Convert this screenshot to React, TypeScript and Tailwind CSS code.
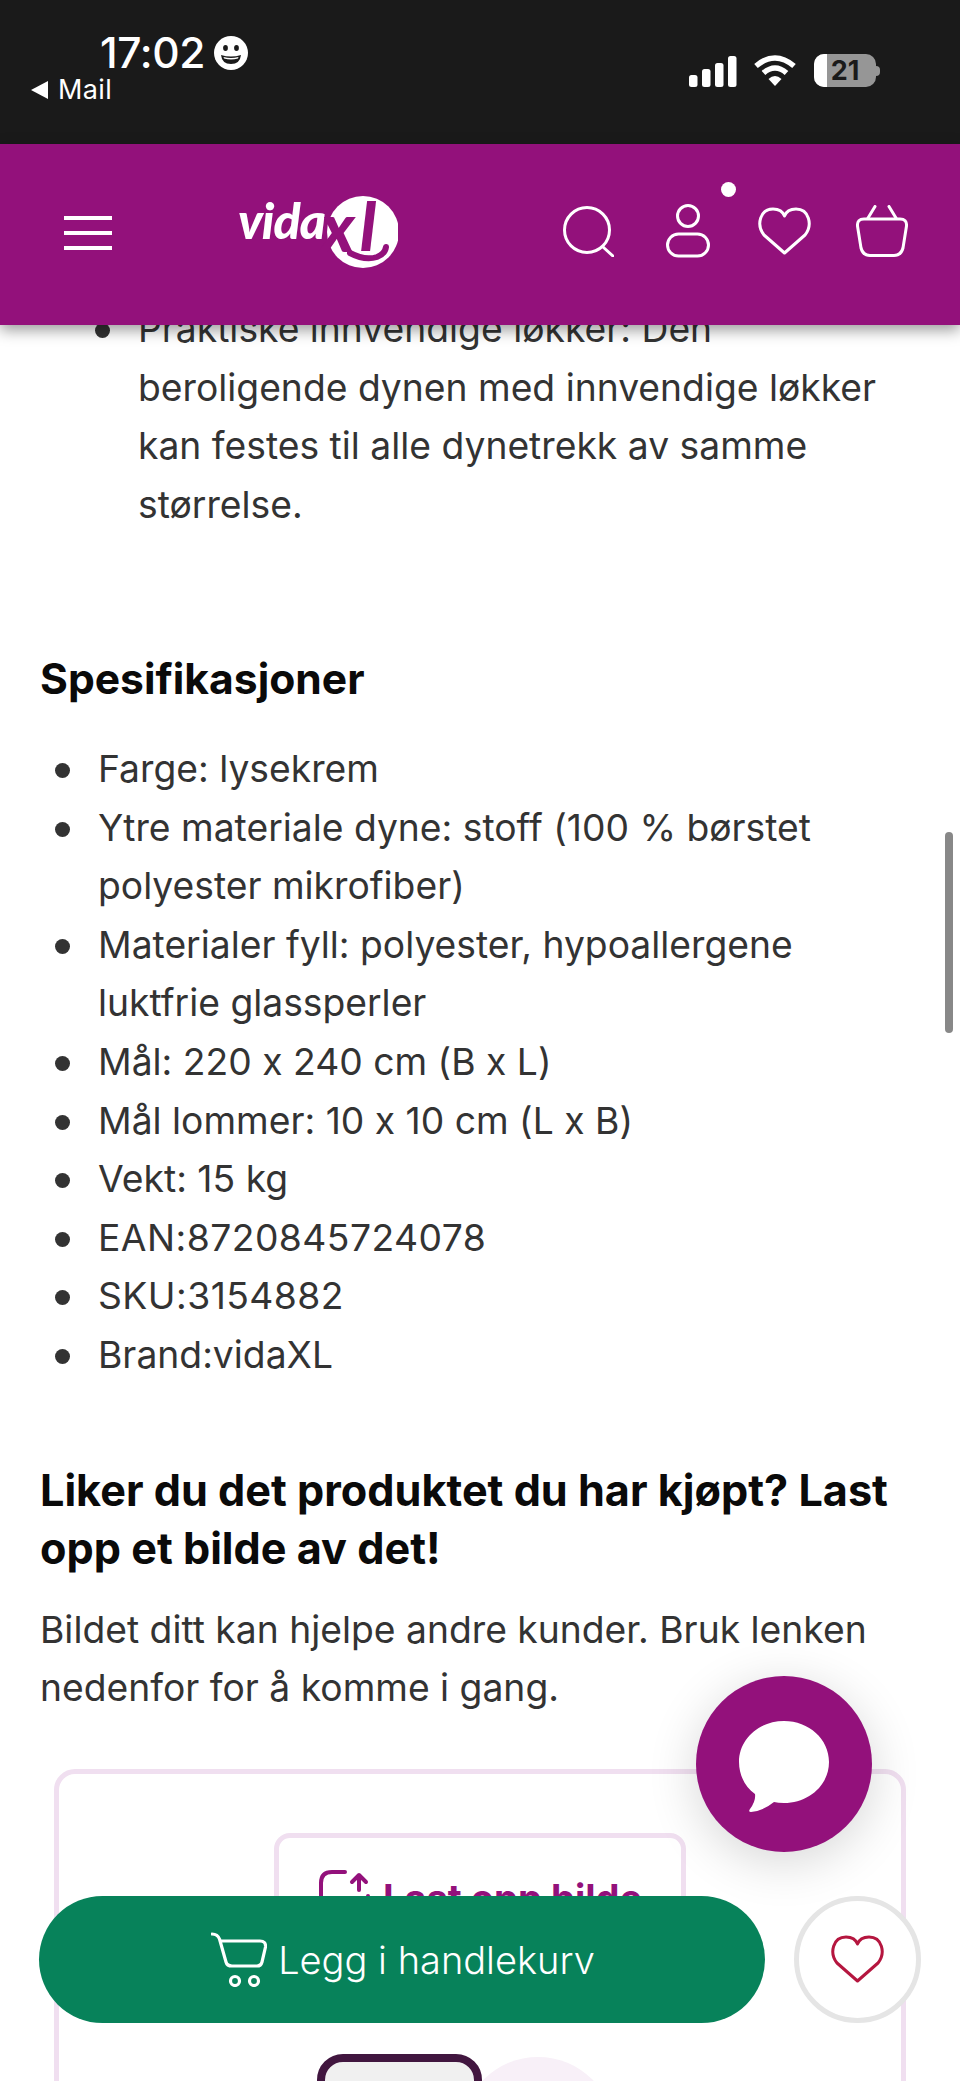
const font = { fontFamily: "Inter, 'Noto Sans', sans-serif" };

function Heart({ className, sw = 3 }: { className: string; sw?: number }) {
  return (
    <svg viewBox="0 0 53 48" fill="none" stroke="currentColor" strokeWidth={sw} strokeLinejoin="round" className={className}>
      <path d="M26.5 46 L6 28 C-2 18 2 2 15 2 C21 2 25 5 26.5 9 C28 5 32 2 38 2 C51 2 55 18 47 28 Z" />
    </svg>
  );
}

function StatusBar() {
  return (
    <div className="flex h-[144px] bg-[#1a1a1a] text-white">
      <div className="w-[689px] pt-[32px]">
        <div className="flex items-center pl-[100px] h-[42px]">
          <span className="text-[42.5px] leading-[42px] font-medium tracking-[-0.4px]">17:02</span>
          <svg viewBox="0 0 34 34" className="ml-[9px] w-[34px] h-[34px]">
            <circle cx="17" cy="17" r="17" fill="#fff" />
            <ellipse cx="11.5" cy="12" rx="2.4" ry="3" fill="#1a1a1a" />
            <ellipse cx="22.5" cy="12" rx="2.4" ry="3" fill="#1a1a1a" />
            <path d="M7 19 Q17 22 27 19 Q26 28 17 28 Q8 28 7 19 Z" fill="#1a1a1a" />
            <path d="M9.5 21 Q17 23 24.5 21 L24 22.5 Q17 24.5 10 22.5 Z" fill="#fff" />
          </svg>
        </div>
        <div className="flex items-center pl-[31px] mt-[-1px] h-[34px]">
          <svg viewBox="0 0 17 18" className="w-[17px] h-[18px]">
            <path d="M0 9 L17 0 V18 Z" fill="#fff" />
          </svg>
          <span className="ml-[10px] text-[27px] leading-[34px] tracking-[0.4px]">Mail</span>
        </div>
      </div>
      <div className="flex items-start pt-[54px]">
        <svg viewBox="0 0 48 31" className="w-[48px] h-[31px] mt-[2px]">
          <rect x="0" y="19" width="8.5" height="12" rx="2.5" fill="#fff" />
          <rect x="13" y="13" width="8.5" height="18" rx="2.5" fill="#fff" />
          <rect x="26" y="7" width="8.5" height="24" rx="2.5" fill="#fff" />
          <rect x="39" y="0" width="8.5" height="31" rx="2.5" fill="#fff" />
        </svg>
        <svg viewBox="0 0 42 32" className="ml-[17px] w-[42px] h-[32px] mt-[1px]" fill="none">
          <path d="M2 11 Q21 -5 40 11" stroke="#fff" strokeWidth="5.5" />
          <path d="M9.5 18 Q21 8 32.5 18" stroke="#fff" strokeWidth="5.5" />
          <path d="M14.5 24 Q21 18 27.5 24 L21 31 Z" fill="#fff" />
        </svg>
        <div className="ml-[18px] flex items-center">
          <div className="relative w-[62px] h-[33px] rounded-[10px] overflow-hidden bg-[#969696]">
            <div className="w-[13px] h-full bg-white" />
            <span className="absolute inset-0 flex items-center justify-center text-[#1a1a1a] text-[27px] font-bold leading-none">21</span>
          </div>
          <div className="w-[4px] h-[10px] rounded-r-full bg-[#969696]" />
        </div>
      </div>
    </div>
  );
}

function Logo() {
  return (
    <svg viewBox="0 -24 160 122" className="ml-[126px] w-[160px] h-[122px] mt-[-5px]">
      <circle cx="125" cy="37" r="36" fill="#fff" />
      <text x="0" y="44" fontFamily="Lato, sans-serif" fontWeight="900" fontStyle="italic" fontSize="50" fill="#fff" letterSpacing="-1">vida</text>
      <text x="83" y="57" fontFamily="Lato, sans-serif" fontWeight="900" fontStyle="italic" fontSize="68" fill="#93117b" letterSpacing="-3">x</text>
      <text x="122" y="56" fontFamily="Lato, sans-serif" fontWeight="900" fontStyle="italic" fontSize="66" fill="#93117b">l</text>
      <path d="M112 58 Q127 66 139 62 Q147 59 148 52" fill="none" stroke="#93117b" strokeWidth="6" strokeLinecap="round" />
    </svg>
  );
}

function Header() {
  return (
    <div className="relative z-10 flex items-center h-[181px] bg-[#93117b] pl-[64px] text-white shadow-[0_5px_14px_rgba(0,0,0,0.4)]">
      <div className="flex flex-col gap-[11px] w-[48px] mt-[-4px]">
        <div className="h-[4px] bg-white" />
        <div className="h-[4px] bg-white" />
        <div className="h-[4px] bg-white" />
      </div>
      <Logo />
      <svg viewBox="0 0 51 51" fill="none" stroke="currentColor" strokeWidth="3" strokeLinecap="round" className="ml-[165px] w-[51px] h-[51px] mt-[-7px]">
        <circle cx="24" cy="24" r="22.5" />
        <path d="M40 41 L50 50" />
      </svg>
      <div className="relative ml-[52px] w-[44px] h-[54px] mt-[-7px]">
        <svg viewBox="0 0 44 54" fill="none" stroke="currentColor" strokeWidth="3" className="w-[44px] h-[54px]">
          <circle cx="22" cy="12" r="10.5" />
          <rect x="1.5" y="30" width="41" height="22" rx="11" />
        </svg>
        <div className="absolute left-[55px] top-[-22px] w-[15px] h-[15px] rounded-full bg-white" />
      </div>
      <Heart className="ml-[48px] w-[53px] h-[48px] mt-[-7px]" />
      <svg viewBox="0 0 52 52" fill="none" stroke="currentColor" strokeWidth="3" strokeLinecap="round" className="ml-[45px] w-[52px] h-[52px] mt-[-7px]">
        <path d="M8 14 H44 Q51 14 50.5 21 L47 43 Q45 50.5 38 50.5 H14 Q7 50.5 5 43 L1.5 21 Q1 14 8 14 Z" />
        <path d="M12 13 L19 1.5 M40 13 L33 1.5" />
      </svg>
    </div>
  );
}

function Item({ text, wide }: { text: string; wide?: boolean }) {
  return (
    <li className="flex">
      <span className="mt-[23px] h-[15px] w-[15px] shrink-0 rounded-full bg-[#333333]" />
      <span className={wide ? "ml-[28px] tracking-[0.45px]" : "ml-[28px]"}>{text}</span>
    </li>
  );
}

function Content() {
  const specs = [
    "Farge: lysekrem",
    "Ytre materiale dyne: stoff (100 % børstet polyester mikrofiber)",
    "Materialer fyll: polyester, hypoallergene luktfrie glassperler",
    "Mål: 220 x 240 cm (B x L)",
    "Mål lommer: 10 x 10 cm (L x B)",
    "Vekt: 15 kg",
  ];
  return (
    <div className="mt-[-25px] pl-[40px] pr-[40px] text-[37.25px] leading-[58.6px] text-[#333333] [font-feature-settings:'calt'_0]">
      <ul className="pl-[55px]">
        <Item text="Praktiske innvendige løkker: Den beroligende dynen med innvendige løkker kan festes til alle dynetrekk av samme størrelse." />
      </ul>
      <h3 className="mt-[116px] text-[42.6px] leading-[58.6px] font-bold text-[#0a0a0a]">Spesifikasjoner</h3>
      <ul className="mt-[31px] pl-[15px]">
        {specs.map((s) => (
          <Item key={s} text={s} />
        ))}
        <Item wide text="EAN:8720845724078" />
        <Item wide text="SKU:3154882" />
        <Item text="Brand:vidaXL" />
      </ul>
      <h3 className="mt-[76px] text-[43.2px] leading-[58.6px] font-bold text-[#0a0a0a]">Liker du det produktet du har kjøpt? Last opp et bilde av det!</h3>
      <p className="mt-[23px]">Bildet ditt kan hjelpe andre kunder. Bruk lenken nedenfor for å komme i gang.</p>
      <div className="mt-[51px] mx-[14px] h-[500px] rounded-[21px] border-[5px] border-[#f0dff0] pt-[59px]">
        <div className="mx-auto flex w-[412px] h-[130px] rounded-[16px] border-[5px] border-[#f0dff0] pl-[39px] pt-[32px]">
          <svg viewBox="0 0 60 60" fill="none" stroke="#93117b" strokeWidth="4" strokeLinecap="round" strokeLinejoin="round" className="w-[60px] h-[60px]">
            <path d="M27 2 H14 Q3 2 3 13 V58" />
            <path d="M41 20 V6 M34 12 L41 5 L48 12" />
            <path d="M50 26 V30" />
          </svg>
          <span className="ml-[5px] mt-[-2px] text-[38px] leading-[60px] font-bold text-[#93117b] whitespace-nowrap">Last opp bilde</span>
        </div>
        <div className="mt-[91px] flex pl-[258px]">
          <div className="relative z-[1] w-[165px] h-[200px] rounded-[26px] border-[8px] border-[#41163f] bg-[#f0f0f0]" />
          <div className="ml-[-21px] mt-[3px] w-[154px] h-[154px] rounded-full bg-[#f8f0f8]" />
        </div>
      </div>
    </div>
  );
}

export default function App() {
  return (
    <div className="relative w-[960px] h-[2081px] overflow-hidden bg-white" style={font}>
      <StatusBar />
      <Header />
      <Content />

      <div className="absolute left-[945px] top-[832px] w-[8px] h-[201px] rounded-full bg-[#888888]" />

      <div className="absolute left-[696px] top-[1676px] z-20 flex items-center justify-center w-[176px] h-[176px] rounded-full bg-[#93117b] shadow-[0_10px_50px_rgba(0,0,0,0.16)]">
        <svg viewBox="0 0 90 92" className="w-[90px] h-[92px] mt-[5px]">
          <path d="M45 0 C70 0 90 18 90 41 C90 64 70 82 45 82 Q39 82 35 81 Q24 90 12 91 Q9 91 11 88 Q17 80 16 73 C6 66 0 54 0 41 C0 18 20 0 45 0 Z" fill="#fff" />
        </svg>
      </div>

      <div className="absolute left-[39px] top-[1896px] z-20 flex items-center justify-center w-[726px] h-[127px] rounded-full bg-[#07825a] pl-[2px] text-white">
        <svg viewBox="0 0 56 55" fill="none" stroke="currentColor" strokeWidth="3.2" strokeLinecap="round" strokeLinejoin="round" className="w-[56px] h-[55px]">
          <path d="M1 2 C5 2 7 3 8.5 7 L15 30 Q16 34 21 34 H46 Q50 34 51 30 L54.5 15 Q55 9 49 9 H10" />
          <circle cx="24" cy="49" r="4.5" />
          <circle cx="43" cy="49" r="4.5" />
        </svg>
        <span className="ml-[11px] text-[38px] leading-[58px] font-light whitespace-nowrap">Legg i handlekurv</span>
      </div>

      <div className="absolute left-[794px] top-[1896px] z-20 flex items-center justify-center w-[127px] h-[127px] rounded-full border-[5px] border-[#e5e5e5] bg-white text-[#b5163f]">
        <Heart className="w-[53px] h-[48px] mt-[-2px]" />
      </div>
    </div>
  );
}
